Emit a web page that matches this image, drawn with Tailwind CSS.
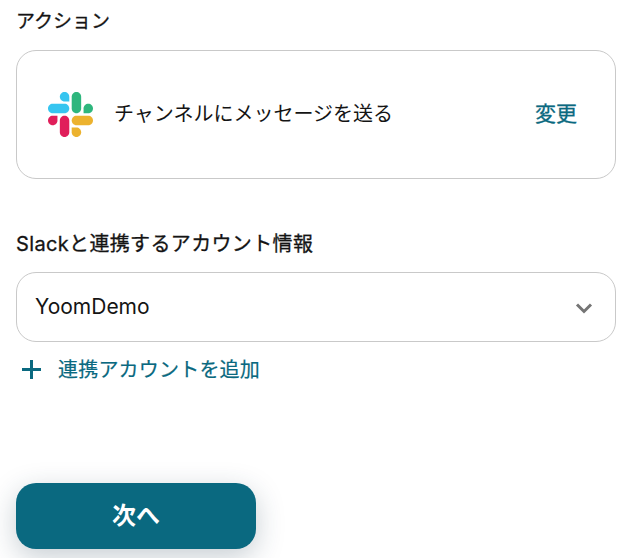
<!DOCTYPE html>
<html lang="ja">
<head>
    <meta charset="UTF-8">
    <title>Slack連携</title>
    <script src="https://cdn.jsdelivr.net/npm/@tailwindcss/browser@4"></script>
</head>
<body class="bg-white overflow-hidden h-[558px] [font-family:Inter,'Noto_Sans_CJK_JP',sans-serif] text-[#141414]">
    <main class="px-4 pt-[8px] w-[632px]">
        <h2 class="text-[19px] leading-7 [-webkit-text-stroke:0.3px]">アクション</h2>

        <div class="mt-[14px] h-[129px] border border-[#c9c9c9] rounded-[20px] flex items-center pl-[31px] pr-[38px]">
            <svg class="w-[45px] h-[45px] -mt-[1px]" viewBox="0 0 122.8 122.8">
                <path d="M25.8 77.6c0 7.1-5.8 12.9-12.9 12.9S0 84.7 0 77.6s5.8-12.9 12.9-12.9h12.9v12.9z" fill="#E01E5A"/>
                <path d="M32.3 77.6c0-7.1 5.8-12.9 12.9-12.9s12.9 5.8 12.9 12.9v32.3c0 7.1-5.8 12.9-12.9 12.9s-12.9-5.8-12.9-12.9V77.6z" fill="#E01E5A"/>
                <path d="M45.2 25.8c-7.1 0-12.9-5.8-12.9-12.9S38.1 0 45.2 0s12.9 5.8 12.9 12.9v12.9H45.2z" fill="#36C5F0"/>
                <path d="M45.2 32.3c7.1 0 12.9 5.8 12.9 12.9s-5.8 12.9-12.9 12.9H12.9C5.8 58.1 0 52.3 0 45.2s5.8-12.9 12.9-12.9h32.3z" fill="#36C5F0"/>
                <path d="M97 45.2c0-7.1 5.8-12.9 12.9-12.9s12.9 5.8 12.9 12.9-5.8 12.9-12.9 12.9H97V45.2z" fill="#2EB67D"/>
                <path d="M90.5 45.2c0 7.1-5.8 12.9-12.9 12.9s-12.9-5.8-12.9-12.9V12.9C64.7 5.8 70.5 0 77.6 0s12.9 5.8 12.9 12.9v32.3z" fill="#2EB67D"/>
                <path d="M77.6 97c7.1 0 12.9 5.8 12.9 12.9s-5.8 12.9-12.9 12.9-12.9-5.8-12.9-12.9V97h12.9z" fill="#ECB22E"/>
                <path d="M77.6 90.5c-7.1 0-12.9-5.8-12.9-12.9s5.8-12.9 12.9-12.9h32.3c7.1 0 12.9 5.8 12.9 12.9s-5.8 12.9-12.9 12.9H77.6z" fill="#ECB22E"/>
            </svg>
            <span class="ml-[21px] text-[20px] -mt-[1px]">チャンネルにメッセージを送る</span>
            <span class="ml-auto text-[21px] text-[#0a6980] -mt-[1px] [-webkit-text-stroke:0.3px]">変更</span>
        </div>

        <h2 class="mt-[51px] text-[20px] tracking-[0.35px] leading-7 [-webkit-text-stroke:0.3px]">Slackと連携するアカウント情報</h2>

        <div class="mt-[14px] h-[70px] border border-[#c9c9c9] rounded-[20px] flex items-center justify-between pl-[18px] pr-[21px]">
            <span class="text-[21px]">YoomDemo</span>
            <svg class="w-[20px] h-[20px] mt-[2px]" viewBox="0 0 20 20" fill="none" stroke="#757575" stroke-width="3">
                <path d="M3 6.5l7 7 7-7"/>
            </svg>
        </div>

        <div class="mt-[14px] h-7 flex items-center text-[#0a6980]">
            <svg class="ml-[5px] w-[21px] h-[21px] -mt-[1px]" viewBox="0 0 21 21" fill="none" stroke="#0a6980" stroke-width="3">
                <path d="M10.5 1v19M1 10.5h19"/>
            </svg>
            <span class="ml-[16px] text-[20px] tracking-[0.2px] [-webkit-text-stroke:0.2px]">連携アカウントを追加</span>
        </div>

        <button class="mt-[99px] w-[240px] h-[66px] rounded-[20px] bg-[#0a6980] text-white text-[24px] font-bold shadow-[0_8px_28px_rgba(30,60,80,0.25)]">次へ</button>
    </main>
</body>
</html>
